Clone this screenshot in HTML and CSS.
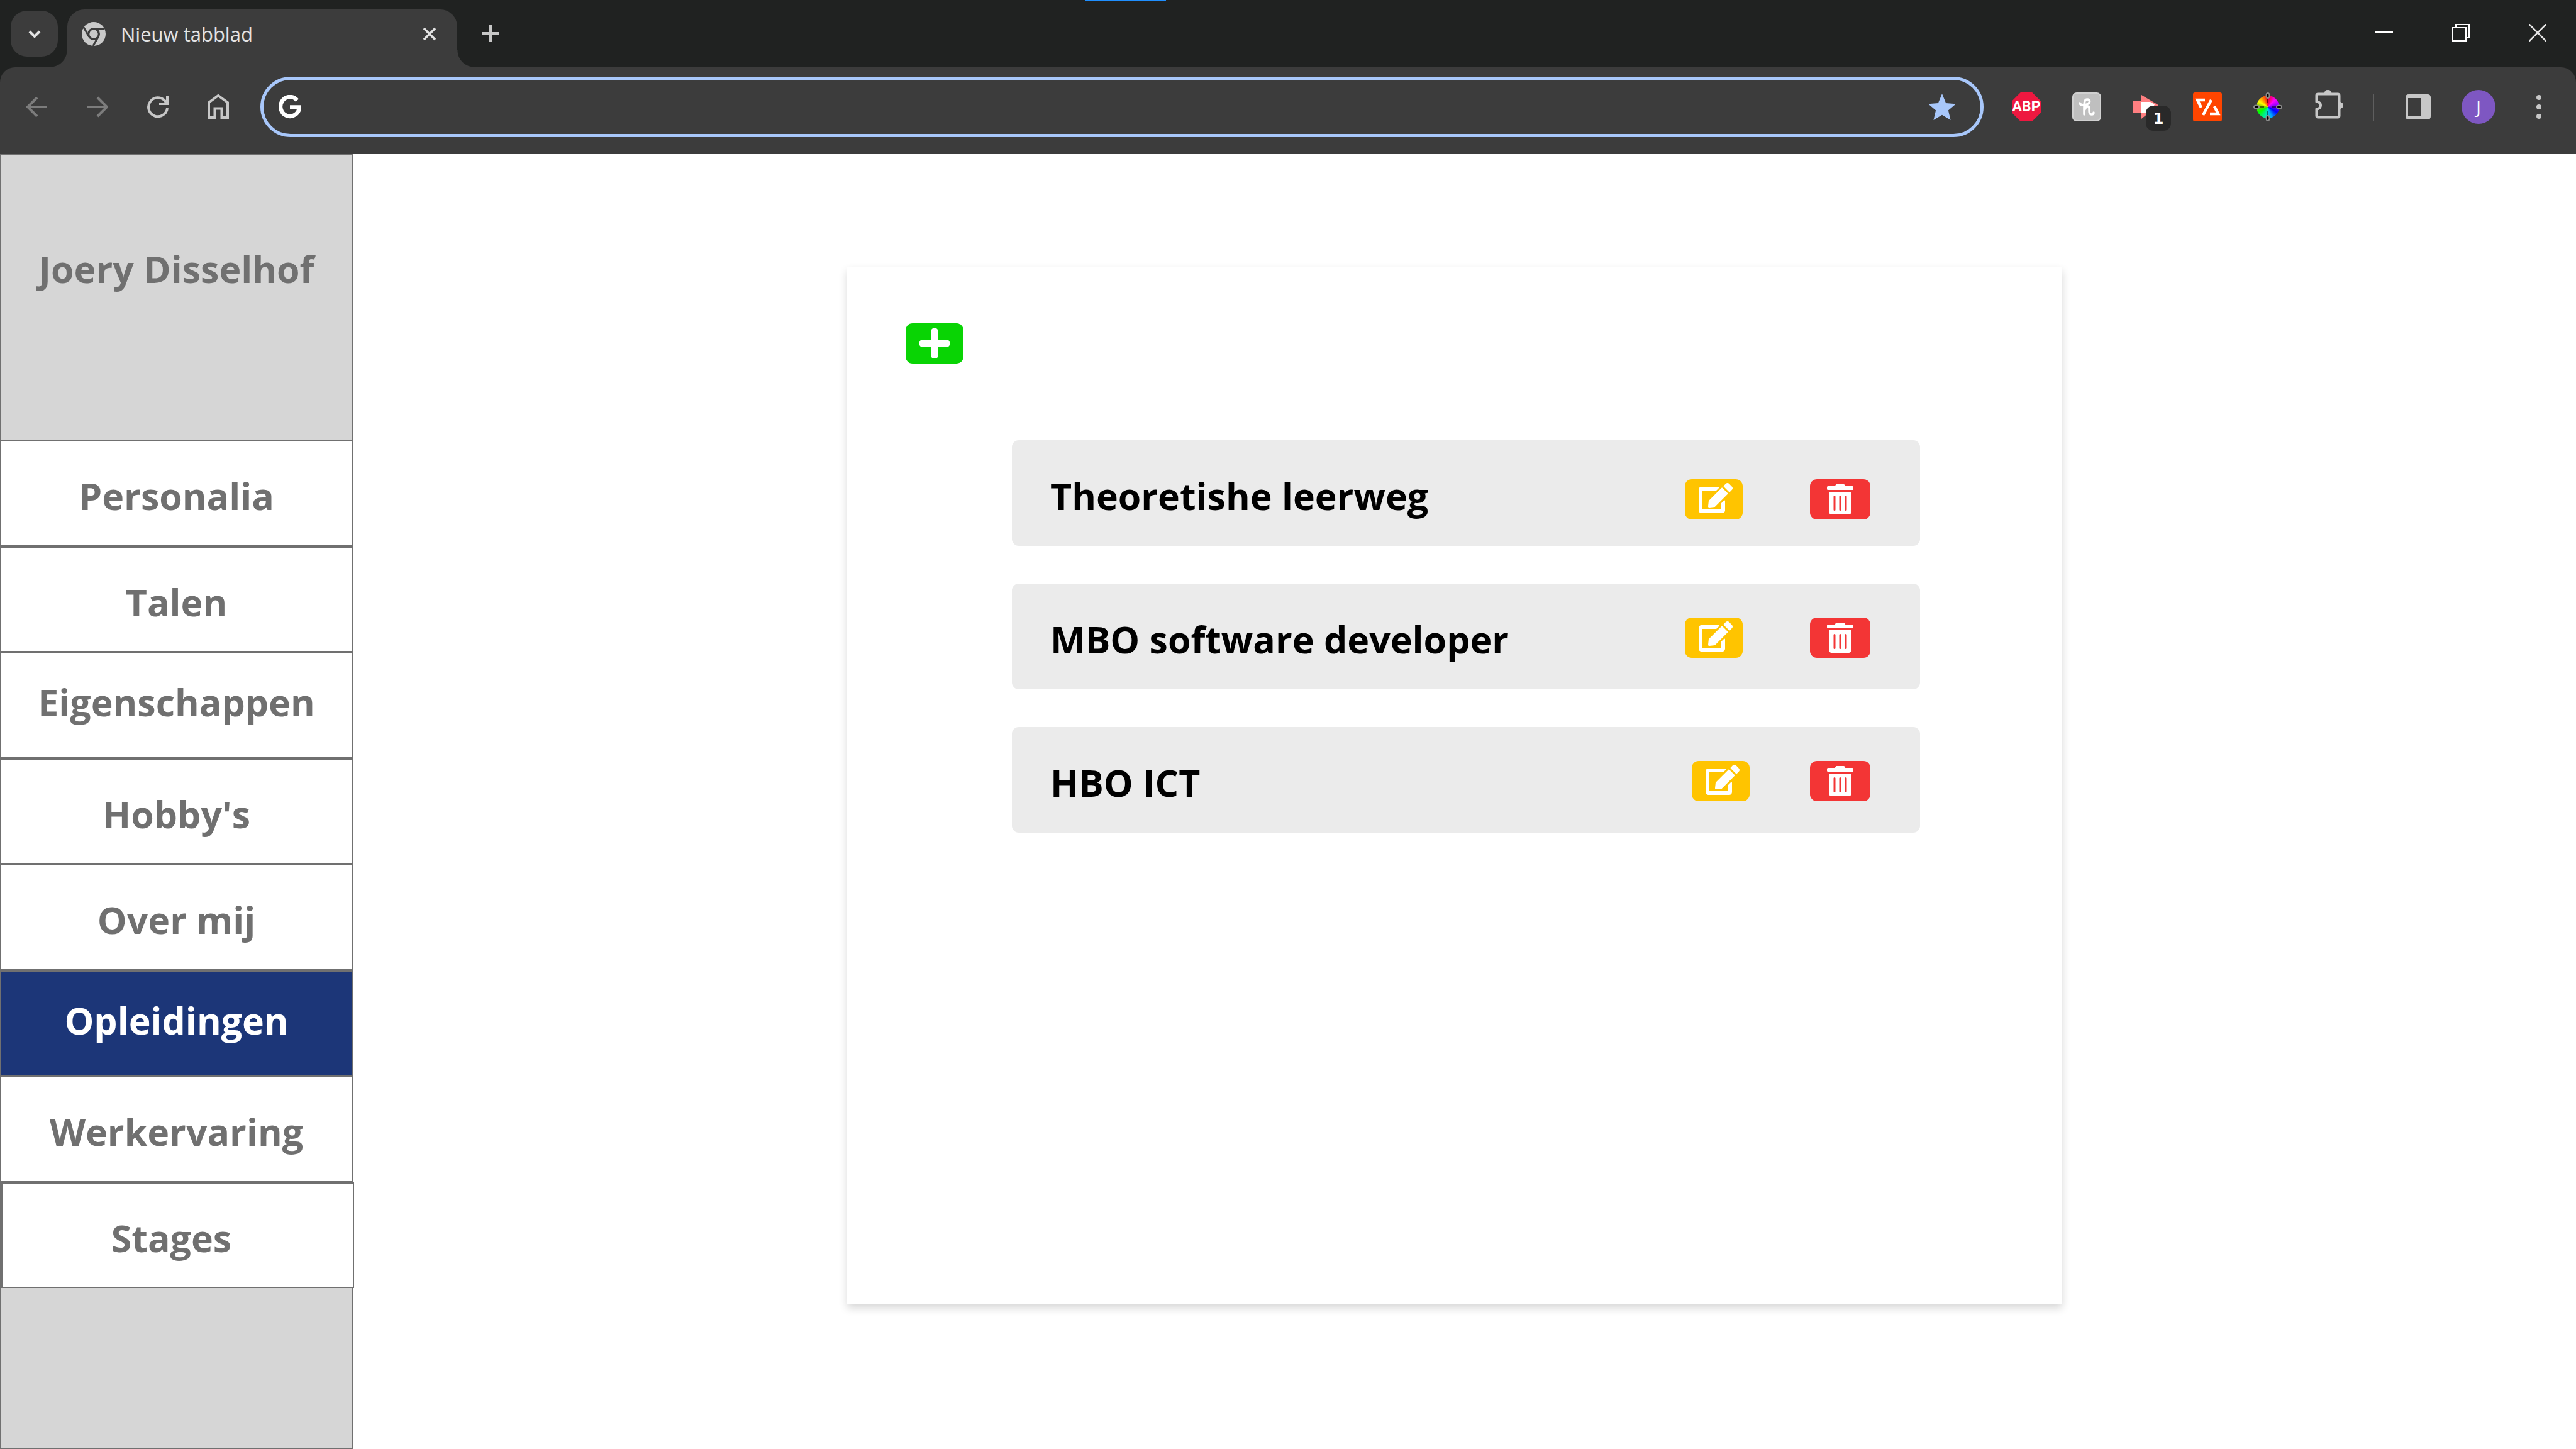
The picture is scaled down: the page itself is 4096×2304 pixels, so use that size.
FILE: index.html
```html
<!DOCTYPE html>
<html lang="nl">
<head>
  <meta charset="utf-8">
  <meta name="viewport" content="width=device-width, initial-scale=1">
  <title>Opleidingen</title>
  <link rel="stylesheet" href="styles.css">
</head>
<body>
  <header class="browser">
    <div class="tabstrip">
      <span class="drag-mark"></span>
      <button class="tab-search" type="button" aria-label="Tabbladen zoeken">
        <svg width="22" height="16" viewBox="0 0 22 16"><path d="M3 4l8 8 8-8" fill="none" stroke="#e3e3e3" stroke-width="4"/></svg>
      </button>
      <div class="tab">
        <svg width="38" height="38" viewBox="0 0 38 38">
          <circle cx="19" cy="19" r="19" fill="#c9c9c9"/>
          <circle cx="19" cy="19" r="10" fill="#3c3c3c"/>
          <path d="M19 10.500H36M11.600 23.200L3 8.500M26.400 23.200L18 38" stroke="#3c3c3c" stroke-width="3" fill="none"/>
          <circle cx="19" cy="19" r="6.700" fill="#c9c9c9"/>
        </svg>
        <span class="tab-title">Nieuw tabblad</span>
        <button class="plain" type="button" aria-label="Tabblad sluiten">
          <svg width="22" height="22" viewBox="0 0 22 22"><path d="M2 2l18 18M20 2L2 20" stroke="#e3e3e3" stroke-width="3.500"/></svg>
        </button>
      </div>
      <button class="plain new-tab" type="button" aria-label="Nieuw tabblad openen">
        <svg width="28" height="28" viewBox="0 0 28 28"><path d="M14 0v28M0 14h28" stroke="#c7c7c7" stroke-width="4"/></svg>
      </button>
      <div class="window-controls">
        <button class="plain" type="button" aria-label="Minimaliseren">
          <svg width="28" height="28" viewBox="0 0 28 28"><path d="M0 13h28" stroke="#fff" stroke-width="2"/></svg>
        </button>
        <button class="plain" type="button" aria-label="Verkleinen">
          <svg width="28" height="28" viewBox="0 0 28 28"><path d="M1 6h21v21H1zM6 6V1h21v21h-5" fill="none" stroke="#fff" stroke-width="2"/></svg>
        </button>
        <button class="plain" type="button" aria-label="Sluiten">
          <svg width="28" height="28" viewBox="0 0 28 28"><path d="M0 0l28 28M28 0L0 28" stroke="#e6e6e6" stroke-width="2.500"/></svg>
        </button>
      </div>
    </div>

    <div class="toolbar">
      <button class="tool" type="button" aria-label="Vorige">
        <svg width="34" height="34" viewBox="0 0 34 34"><path d="M33 17H4M17 2L2 17l15 15" fill="none" stroke="#7c7c7c" stroke-width="4"/></svg>
      </button>
      <button class="tool" type="button" aria-label="Volgende">
        <svg width="34" height="34" viewBox="0 0 34 34"><path d="M1 17h29M17 2l15 15-15 15" fill="none" stroke="#7c7c7c" stroke-width="4"/></svg>
      </button>
      <button class="tool" type="button" aria-label="Opnieuw laden">
        <svg width="36" height="36" viewBox="0 0 36 36"><path d="M33 20A15 15 0 1 1 29.500 8.500L32 12" fill="none" stroke="#c7c7c7" stroke-width="4"/><path d="M35 1v14H20v-3.500h7.500L31 9V1z" fill="#c7c7c7"/></svg>
      </button>
      <button class="tool" type="button" aria-label="Startpagina">
        <svg width="36" height="42" viewBox="0 0 36 42"><path d="M3 14L18 3l15 11v24H23.500V23.500h-11V38H3z" fill="none" stroke="#c7c7c7" stroke-width="4"/></svg>
      </button>
      <div class="omnibox">
        <svg width="36" height="38" viewBox="0 0 36 38"><path d="M29.500 8.500A15 15.500 0 1 0 33 19.500H18" fill="none" stroke="#fff" stroke-width="6.500"/></svg>
        <input class="address" type="text" aria-label="Adresbalk">
        <button class="plain" type="button" aria-label="Bladwijzer">
          <svg width="44" height="42" viewBox="0 0 44 42"><path d="M22 0l6.200 15L44 16.200 31.900 26.500 35.600 42 22 33.700 8.400 42l3.700-15.500L0 16.200 15.800 15z" fill="#a8c7fa"/></svg>
        </button>
      </div>
      <button class="tool" type="button" aria-label="Adblock Plus"><span class="abp">ABP</span></button>
      <button class="tool" type="button" aria-label="Honey">
        <svg width="46" height="46" viewBox="0 0 46 46">
          <rect x="1" y="1" width="44" height="44" rx="6" fill="#bfbfbf" stroke="#d0d0d0" stroke-width="2"/>
          <path d="M12 17c1 4 6 3 11 2 6-2 6-8 1-8-6 0-5 8-5 24M20 27c3-7 7-6 7-1 0 6 0 9 4 9 2 0 3-1 3-3" fill="none" stroke="#fff" stroke-width="3.500" stroke-linecap="round"/>
        </svg>
      </button>
      <button class="tool" type="button" aria-label="Meldingen, 1 nieuw">
        <svg width="46" height="38" viewBox="0 0 46 38"><path d="M0 10h14v18H0zM14 0l27 16-27 22z" fill="#ff7f81"/><path d="M14 11h14l7 4-7 13H14z" fill="#fff"/></svg>
        <span class="badge">1</span>
      </button>
      <button class="tool" type="button" aria-label="Ontwikkelhulp">
        <svg width="46" height="46" viewBox="0 0 46 46"><rect width="46" height="46" rx="3" fill="#ff4500"/><path d="M19 12H7l6 12M29 12L16 36M34 22l6 12H27" fill="none" stroke="#fff" stroke-width="4.500"/></svg>
      </button>
      <button class="tool" type="button" aria-label="Kleurkiezer">
        <span class="wheel">
          <svg width="46" height="46" viewBox="0 0 46 46"><path d="M23 5v12M23 29v12M5 23h12M29 23h12" stroke="#000" stroke-opacity=".5" stroke-width="2"/><g fill="#000" stroke="#8c8c8c" stroke-width="2"><ellipse cx="23" cy="5" rx="2.500" ry="4"/><ellipse cx="23" cy="41" rx="2.500" ry="4"/><ellipse cx="5" cy="23" rx="4" ry="2.500"/><ellipse cx="41" cy="23" rx="4" ry="2.500"/></g></svg>
        </span>
      </button>
      <button class="tool" type="button" aria-label="Extensies">
        <svg width="46" height="54" viewBox="-2 3 46 54"><path d="M2.500 11.500Q2.500 9.500 5 9.500H36Q38.500 9.500 38.500 12V44Q38.500 46.500 36 46.500H5Q2.500 46.500 2.500 44V34Q9 32 9 27.500T2.500 21z" fill="none" stroke="#c7c7c7" stroke-width="4"/><path d="M15 9a5.500 6 0 0 1 11 0zM38 22a6.500 5.500 0 0 1 0 11z" fill="#c7c7c7" stroke="#c7c7c7"/></svg>
      </button>
      <span class="divider"></span>
      <button class="tool" type="button" aria-label="Zijvenster">
        <svg width="40" height="42" viewBox="0 0 40 42"><path d="M5 1h30q5 0 5 5v30q0 5-5 5H5q-5 0-5-5V6q0-5 5-5zM4 7v28h20V7z" fill="#c7c7c7" fill-rule="evenodd"/></svg>
      </button>
      <button class="tool" type="button" aria-label="Profiel"><span class="avatar">J</span></button>
      <button class="tool" type="button" aria-label="Menu">
        <svg width="8" height="40" viewBox="0 0 8 40"><g fill="#c7c7c7"><circle cx="4" cy="5" r="4"/><circle cx="4" cy="20" r="4"/><circle cx="4" cy="35" r="4"/></g></svg>
      </button>
    </div>
  </header>

  <div class="page">
    <aside class="sidebar">
      <h1 class="owner">Joery Disselhof</h1>
      <nav class="nav">
        <a class="nav-link" href="#personalia">Personalia</a>
        <a class="nav-link" href="#talen">Talen</a>
        <a class="nav-link nav-link-raised" href="#eigenschappen">Eigenschappen</a>
        <a class="nav-link" href="#hobbys">Hobby's</a>
        <a class="nav-link" href="#over-mij">Over mij</a>
        <a class="nav-link nav-link-raised nav-link-active" href="#opleidingen" aria-current="page">Opleidingen</a>
        <a class="nav-link" href="#werkervaring">Werkervaring</a>
        <a class="nav-link nav-link-last" href="#stages">Stages</a>
      </nav>
    </aside>

    <main class="content">
      <section class="card">
        <button class="action action-add" type="button" aria-label="Opleiding toevoegen">
          <svg width="48" height="48" viewBox="0 32 448 448"><path d="M416 208H272V64c0-17.670-14.330-32-32-32h-32c-17.670 0-32 14.330-32 32v144H32c-17.670 0-32 14.330-32 32v32c0 17.670 14.330 32 32 32h144v144c0 17.670 14.330 32 32 32h32c17.670 0 32-14.330 32-32V304h144c17.670 0 32-14.330 32-32v-32c0-17.670-14.330-32-32-32z" fill="#fff"/></svg>
        </button>
        <svg class="symbols" width="0" height="0" aria-hidden="true">
          <symbol id="edit" viewBox="0 0 576 512"><path d="M402.600 83.200l90.200 90.200c3.800 3.800 3.800 10 0 13.800L274.400 405.600l-92.800 10.300c-12.400 1.400-22.900-9.100-21.500-21.500l10.300-92.800L388.800 83.200c3.800-3.800 10-3.800 13.800 0zm162-22.900l-48.800-48.800c-15.200-15.200-39.900-15.200-55.200 0l-35.400 35.400c-3.800 3.800-3.800 10 0 13.800l90.200 90.200c3.800 3.800 10 3.800 13.800 0l35.400-35.400c15.200-15.300 15.200-40 0-55.200zM384 346.200V448H64V128h229.800c3.200 0 6.200-1.300 8.500-3.500l40-40c7.600-7.600 2.200-20.500-8.500-20.500H48C21.500 64 0 85.500 0 112v352c0 26.500 21.500 48 48 48h352c26.500 0 48-21.500 48-48V306.200c0-10.700-12.900-16-20.500-8.500l-40 40c-2.200 2.300-3.500 5.300-3.500 8.500z" fill="#fff"/></symbol>
          <symbol id="trash" viewBox="0 0 448 512"><path d="M32 464a48 48 0 0 0 48 48h288a48 48 0 0 0 48-48V136a8 8 0 0 0-8-8H40a8 8 0 0 0-8 8zm272-256a16 16 0 0 1 32 0v224a16 16 0 0 1-32 0zm-96 0a16 16 0 0 1 32 0v224a16 16 0 0 1-32 0zm-96 0a16 16 0 0 1 32 0v224a16 16 0 0 1-32 0zM432 32H312l-9.400-18.700A24 24 0 0 0 281.100 0H166.800a23.720 23.720 0 0 0-21.400 13.300L136 32H16A16 16 0 0 0 0 48v32a16 16 0 0 0 16 16h416a16 16 0 0 0 16-16V48a16 16 0 0 0-16-16z" fill="#fff"/></symbol>
        </svg>
        <ul class="entries">
          <li class="entry">
            <span class="entry-name">Theoretishe leerweg</span>
            <div class="entry-actions entry-actions-low">
              <button class="action action-edit" type="button" aria-label="Theoretishe leerweg bewerken"><svg width="54" height="48"><use href="#edit"/></svg></button>
              <button class="action action-delete" type="button" aria-label="Theoretishe leerweg verwijderen"><svg width="42" height="48"><use href="#trash"/></svg></button>
            </div>
          </li>
          <li class="entry">
            <span class="entry-name">MBO software developer</span>
            <div class="entry-actions">
              <button class="action action-edit" type="button" aria-label="MBO software developer bewerken"><svg width="54" height="48"><use href="#edit"/></svg></button>
              <button class="action action-delete" type="button" aria-label="MBO software developer verwijderen"><svg width="42" height="48"><use href="#trash"/></svg></button>
            </div>
          </li>
          <li class="entry">
            <span class="entry-name">HBO ICT</span>
            <div class="entry-actions entry-actions-tight">
              <button class="action action-edit" type="button" aria-label="HBO ICT bewerken"><svg width="54" height="48"><use href="#edit"/></svg></button>
              <button class="action action-delete" type="button" aria-label="HBO ICT verwijderen"><svg width="42" height="48"><use href="#trash"/></svg></button>
            </div>
          </li>
        </ul>
      </section>
    </main>
  </div>
</body>
</html>
```
FILE: styles.css
```css
*,
*::before,
*::after {
  box-sizing: border-box;
}

body {
  margin: 0;
  min-height: 100vh;
  display: flex;
  flex-direction: column;
  background: #fff;
  font-family: "Segoe UI", "Open Sans", "Noto Sans", sans-serif;
}

button {
  margin: 0;
  padding: 0;
  border: 0;
  background: none;
  font: inherit;
  color: inherit;
}

svg {
  display: block;
}

/* Browser frame */

.browser {
  background: #202221;
}

.tabstrip {
  position: relative;
  display: flex;
  align-items: flex-start;
  height: 107px;
  padding-left: 17px;
}

.drag-mark {
  position: absolute;
  top: 0;
  left: 1726px;
  width: 128px;
  height: 2px;
  background: #1f8fff;
}

.tab-search {
  display: flex;
  align-items: center;
  justify-content: center;
  width: 75px;
  height: 73px;
  margin-top: 17px;
  border-radius: 26px;
  background: #3c3c3c;
}

.tab {
  position: relative;
  display: flex;
  align-items: center;
  width: 620px;
  height: 92px;
  margin: 15px 0 0 15px;
  padding: 0 33px 15px 23px;
  border-radius: 27px 27px 0 0;
  background: #3c3c3c;
}

.tab::before,
.tab::after {
  content: "";
  position: absolute;
  bottom: 0;
  width: 27px;
  height: 27px;
}

.tab::before {
  right: 100%;
  background: radial-gradient(circle at 0 0, transparent 26px, #3c3c3c 27px);
}

.tab::after {
  left: 100%;
  background: radial-gradient(circle at 100% 0, transparent 26px, #3c3c3c 27px);
}

.tab-title {
  flex: 1;
  padding-left: 24px;
  color: #e3e3e3;
  font-size: 31px;
  line-height: 44px;
}

.plain {
  display: flex;
  align-items: center;
  justify-content: center;
}

.new-tab {
  width: 74px;
  height: 74px;
  margin: 16px 0 0 16px;
}

.window-controls {
  display: grid;
  grid-template-columns: repeat(3, 122px);
  height: 104px;
  margin-left: auto;
}

.toolbar {
  display: flex;
  align-items: center;
  height: 138px;
  padding: 0 11px 12px;
  border-radius: 24px 24px 0 0;
  background: #3c3c3c;
}

.tool {
  position: relative;
  display: flex;
  flex: none;
  align-items: center;
  justify-content: center;
  width: 96px;
  height: 96px;
}

.omnibox {
  display: flex;
  flex: 1;
  align-items: center;
  height: 96px;
  margin: 0 20px 0 19px;
  padding: 0 39px 0 24px;
  border: 5px solid #a8c7fa;
  border-radius: 48px;
}

.address {
  flex: 1;
  min-width: 0;
  margin: 0 24px;
  padding: 0;
  border: 0;
  outline: 0;
  background: none;
  color: #e3e3e3;
  font: inherit;
  font-size: 31px;
}

.abp {
  display: flex;
  justify-content: center;
  width: 46px;
  height: 46px;
  background: #ee1840;
  clip-path: polygon(30% 0, 70% 0, 100% 30%, 100% 70%, 70% 100%, 30% 100%, 0 70%, 0 30%);
  color: #fff;
  font-family: Roboto, sans-serif;
  font-size: 23px;
  font-weight: 700;
  line-height: 46px;
}

.badge {
  position: absolute;
  right: 10px;
  bottom: 10px;
  width: 40px;
  height: 40px;
  border-radius: 12px;
  background: #292929;
  color: #fff;
  font-family: "DejaVu Sans", sans-serif;
  font-size: 24px;
  font-weight: 700;
  line-height: 42px;
  text-align: center;
}

.wheel {
  width: 36px;
  height: 36px;
  border-radius: 50%;
  background: conic-gradient(#f00020, #f0f 45deg, #8000ff 85deg, #00f 120deg, #0af 160deg, #00e5c0 190deg, #0f0 240deg, #8c0 275deg, #ff0 300deg, #f80 330deg, #f00020);
}

.wheel svg {
  margin: -5px;
}

.divider {
  flex: none;
  width: 2px;
  height: 43px;
  margin: 0 22px 0 23px;
  background: #5f5f5f;
}

.avatar {
  width: 54px;
  height: 54px;
  border-radius: 50%;
  background: #7e57c2;
  color: #fff;
  font-size: 28px;
  line-height: 54px;
  text-align: center;
}

/* Page */

.page {
  display: flex;
  flex: 1;
}

.sidebar {
  flex: none;
  width: 561px;
  border: 2px solid #707070;
  background: #d6d6d6;
}

.owner {
  height: 453px;
  margin: 0;
  padding-top: 138px;
  color: #707070;
  font-size: 59px;
  font-weight: 700;
  line-height: 84px;
  text-align: center;
}

.nav {
  display: grid;
  grid-template-rows: repeat(8, 1fr);
  height: 1348px;
  margin: 0 -2px;
}

.nav-link {
  display: flex;
  align-items: center;
  justify-content: center;
  padding-top: 8px;
  border: 2px solid #707070;
  background: #fff;
  color: #707070;
  font-size: 59px;
  font-weight: 700;
  line-height: 84px;
  text-decoration: none;
}

.nav-link-raised {
  padding: 0 0 10px;
}

.nav-link-active {
  background: #1c3678;
  color: #fff;
}

.nav-link-last {
  margin: 0 -2px 0 2px;
  padding-right: 20px;
}

.content {
  display: flex;
  flex: 1;
  padding: 180px 817px 230px 786px;
}

.card {
  flex: 1;
  padding: 89px 226px 0 93px;
  background: #fff;
  box-shadow: 0 6px 13px rgba(0, 0, 0, 0.16);
}

.symbols {
  position: absolute;
}

.action {
  display: flex;
  align-items: center;
  justify-content: center;
  width: 92px;
  height: 64px;
  border-radius: 11px;
}

.action-add {
  background: #09d404;
}

.action-edit {
  padding: 0 0 4px 6px;
  background: #ffc400;
}

.action-delete {
  width: 96px;
  background: #f33535;
}

.entries {
  display: grid;
  gap: 60px;
  margin: 122px 0 0 169px;
  padding: 0;
  list-style: none;
}

.entry {
  display: flex;
  align-items: center;
  justify-content: space-between;
  height: 168px;
  padding: 4px 79px 0 61px;
  border-radius: 11px;
  background: #ebebeb;
}

.entry-name {
  padding-top: 4px;
  color: #000;
  font-size: 59px;
  font-weight: 700;
  line-height: 84px;
}

.entry-actions {
  display: flex;
  gap: 107px;
}

.entry-actions-low {
  padding-top: 16px;
}

.entry-actions-tight {
  gap: 96px;
}
```
